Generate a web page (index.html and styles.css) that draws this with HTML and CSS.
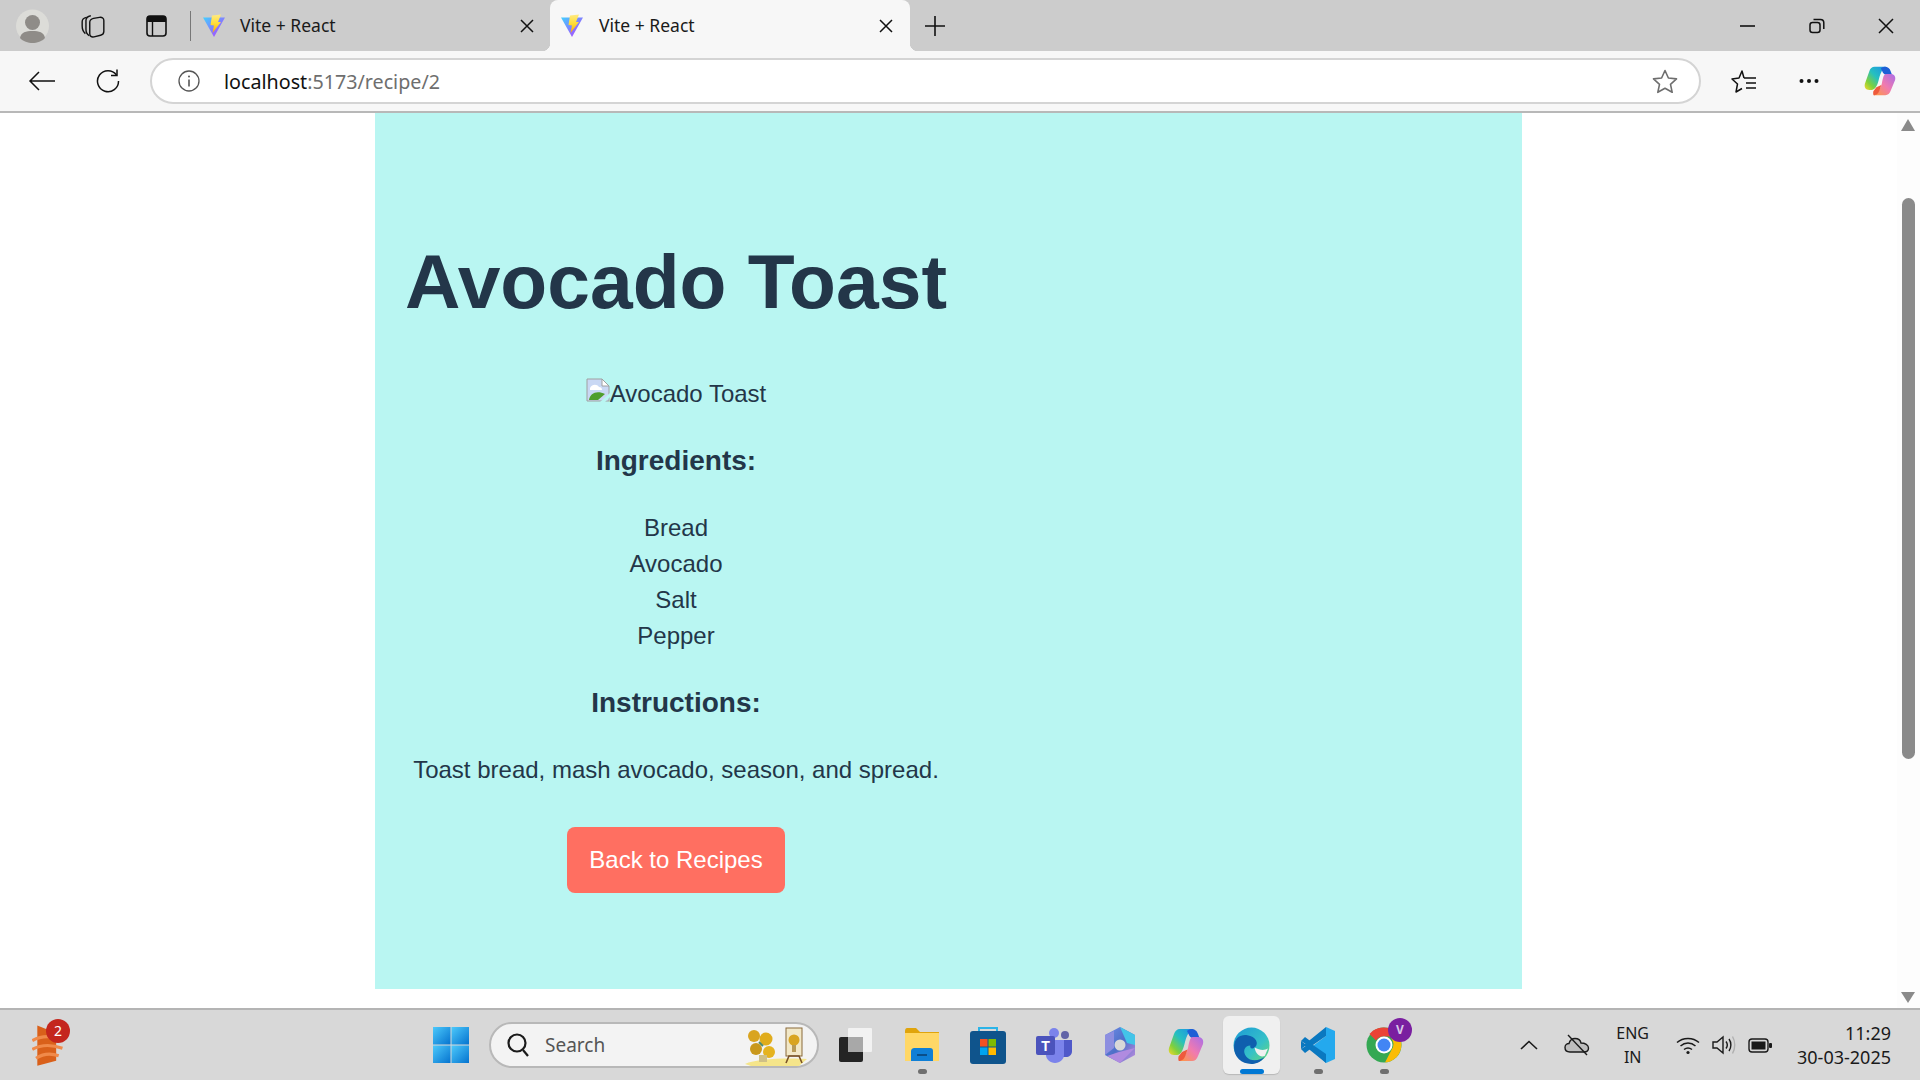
FILE: index.html
```html
<!DOCTYPE html>
<html>
<head>
    <title>Vite + React</title>
    <link rel="stylesheet" href="styles.css">
</head>
<body>
    <svg class="defs" width="0" height="0">
        <defs>
            <linearGradient id="viteBlue" x1="0" y1="0" x2="1" y2="1">
                <stop offset="0" stop-color="#41d1ff"/>
                <stop offset="1" stop-color="#bd34fe"/>
            </linearGradient>
            <linearGradient id="viteBolt" x1="0" y1="0" x2="0" y2="1">
                <stop offset="0" stop-color="#ffea83"/>
                <stop offset="0.5" stop-color="#ffdd35"/>
                <stop offset="1" stop-color="#ffa800"/>
            </linearGradient>
            <linearGradient id="copilotA" x1="1" y1="0" x2="0" y2="1">
                <stop offset="0" stop-color="#1b8fe8"/>
                <stop offset="0.45" stop-color="#25c0c0"/>
                <stop offset="0.75" stop-color="#7fd03c"/>
                <stop offset="1" stop-color="#f7d82a"/>
            </linearGradient>
            <linearGradient id="copilotB" x1="1" y1="0" x2="0" y2="1">
                <stop offset="0" stop-color="#a86ee8"/>
                <stop offset="0.5" stop-color="#f07ab0"/>
                <stop offset="1" stop-color="#ff9a3c"/>
            </linearGradient>
            <linearGradient id="edgeG" x1="0" y1="0" x2="1" y2="1">
                <stop offset="0" stop-color="#1c9ad6"/>
                <stop offset="0.6" stop-color="#35c1c8"/>
                <stop offset="1" stop-color="#6fdc6b"/>
            </linearGradient>
            <linearGradient id="winG" x1="0" y1="0" x2="1" y2="1">
                <stop offset="0" stop-color="#4cc9fb"/>
                <stop offset="1" stop-color="#0573cf"/>
            </linearGradient>
            <linearGradient id="m365G" x1="0" y1="0" x2="1" y2="1">
                <stop offset="0" stop-color="#6f8fe8"/>
                <stop offset="0.5" stop-color="#4e6fc8"/>
                <stop offset="1" stop-color="#c58fe0"/>
            </linearGradient>
            <symbol id="vite" viewBox="0 0 24 24">
                <path d="M1 3.5 L23 3.5 L12 23 Z" fill="url(#viteBlue)"/>
                <path d="M10 1.5 L19 0.5 L16 8 L19 8 L10.5 19 L12 11.5 L8.5 11 Z" fill="url(#viteBolt)"/>
            </symbol>
            <symbol id="copilot" viewBox="0 0 36 36">
                <path d="M12 2 H25 C21 4 19 8 17 15 C15.5 22 13 28 9 28 H6 C2 28 0 25 1 21 L6 7 C7 4 9 2 12 2 Z" fill="url(#copilotA)"/>
                <path d="M23 2 C27 2 29 4 30 7 L31.5 11 H25 C23 11 21.5 9.5 20.5 7 L19 4 C20 3 21.5 2 23 2 Z" fill="#1d5fd6"/>
                <path d="M25 10 H30 C34 10 36 13 35 17 L30 29 C29 32 27 34 24 34 H11 C15 32 18 28 20 21 C21.5 14 22 10 25 10 Z" fill="url(#copilotB)"/>
                <path d="M11 34 C14 34 16.5 32 18 27 L19.5 22.5 L14 25 L10.5 29.5 C10 32 10.5 34 11 34 Z" fill="#ef5a3c"/>
            </symbol>
        </defs>
    </svg>

    <div class="window">
        <!-- Tab strip -->
        <div class="tabstrip">
            <div class="strip-tools">
                <svg class="avatar" width="33" height="34" viewBox="0 0 33 34">
                    <circle cx="16.5" cy="17" r="16.5" fill="#dcdcd8"/>
                    <circle cx="16.5" cy="13.5" r="7.5" fill="#8f8c88"/>
                    <path d="M4 29 C5 23 10 22 16.5 22 C23 22 28 23 29 29 C26 32.5 21 34 16.5 34 C12 34 7 32.5 4 29 Z" fill="#8f8c88"/>
                </svg>
                <svg class="tool-collections" width="24" height="26" viewBox="0 0 22 24" fill="none" stroke="#111" stroke-width="1.3">
                    <path d="M4 19 C1.5 17 1 15 1 12 V8 C1 6 2.5 4.5 5 4"/>
                    <path d="M7.5 21 C5 19.5 4.5 17.5 4.5 15 V7 C4.5 4.5 6 3 9 2.5"/>
                    <path d="M8 8.5 C8 6.5 9.5 5.5 11.5 5 L17 4 C19.5 3.6 21 5 21 7 V17 C21 19 20 20 18 20.5 L12 22 C9.5 22.5 8 21.5 8 19 Z"/>
                </svg>
                <svg class="tool-tabs" width="21" height="22" viewBox="0 0 21 22" fill="none">
                    <rect x="1" y="1" width="19" height="20" rx="3" stroke="#111" stroke-width="1.6"/>
                    <path d="M1 4 a3 3 0 0 1 3 -3 h13 a3 3 0 0 1 3 3 v3 h-19 Z" fill="#111"/>
                    <path d="M6.5 7 v14" stroke="#111" stroke-width="1.4"/>
                </svg>
                <span class="strip-sep"></span>
            </div>
            <div class="tab">
                <svg width="24" height="24"><use href="#vite"/></svg>
                <span class="tab-title">Vite + React</span>
                <svg class="tab-close" width="14" height="14" viewBox="0 0 14 14" stroke="#111" stroke-width="1.5"><path d="M1 1 L13 13 M13 1 L1 13"/></svg>
            </div>
            <div class="tab tab-active">
                <svg width="24" height="24"><use href="#vite"/></svg>
                <span class="tab-title">Vite + React</span>
                <svg class="tab-close" width="14" height="14" viewBox="0 0 14 14" stroke="#111" stroke-width="1.5"><path d="M1 1 L13 13 M13 1 L1 13"/></svg>
            </div>
            <svg class="new-tab" width="22" height="22" viewBox="0 0 22 22" stroke="#111" stroke-width="1.6"><path d="M11 1 V21 M1 11 H21"/></svg>
            <div class="win-controls">
                <svg width="16" height="16" viewBox="0 0 16 16" stroke="#111" stroke-width="1.6"><path d="M0 8 H15"/></svg>
                <svg width="16" height="16" viewBox="0 0 16 16" fill="none" stroke="#111" stroke-width="1.5"><rect x="1" y="4.5" width="10" height="10" rx="2.5"/><path d="M4.5 1.5 H11.5 C13.5 1.5 14.8 2.8 14.8 4.8 V11"/></svg>
                <svg width="16" height="16" viewBox="0 0 16 16" stroke="#111" stroke-width="1.5"><path d="M1 1 L15 15 M15 1 L1 15"/></svg>
            </div>
        </div>

        <!-- Address bar -->
        <div class="toolbar">
            <svg class="btn-back" width="28" height="22" viewBox="0 0 28 22" fill="none" stroke="#111" stroke-width="1.5"><path d="M27 11 H2 M11 2 L2 11 L11 20"/></svg>
            <svg class="btn-reload" width="24" height="24" viewBox="0 0 24 24" fill="none" stroke="#111" stroke-width="1.5"><path d="M20.5 6 A10.5 10.5 0 1 0 22.5 12"/><path d="M21 0.5 V6.5 H15"/></svg>
            <div class="address">
                <svg width="24" height="24" viewBox="0 0 24 24" fill="none" stroke="#555" stroke-width="1.3"><circle cx="12" cy="12" r="10"/><path d="M12 10.5 V17.5" stroke-width="1.6"/><circle cx="12" cy="7.5" r="1" fill="#555" stroke="none"/></svg>
                <div class="url"><span class="url-host">localhost</span>:5173/recipe/2</div>
                <svg class="star" width="26" height="25" viewBox="0 0 26 25" fill="none" stroke="#6e6e6e" stroke-width="1.6" stroke-linejoin="round"><path d="M13 1.5 L16.4 9 L24.5 9.9 L18.5 15.3 L20.2 23.3 L13 19.2 L5.8 23.3 L7.5 15.3 L1.5 9.9 L9.6 9 Z"/></svg>
            </div>
            <svg class="btn-favs" width="26" height="25" viewBox="0 0 26 25" fill="none" stroke="#111" stroke-width="1.5" stroke-linejoin="round"><path d="M13 9 L11 2 L8 9 L1 10 L6.5 15 L5 23 L11 19.5"/><path d="M13 9 H25 M15 14 H25 M15 19 H25"/></svg>
            <svg class="btn-more" width="20" height="6" viewBox="0 0 20 6" fill="#111"><circle cx="2.5" cy="3" r="2"/><circle cx="10" cy="3" r="2"/><circle cx="17.5" cy="3" r="2"/></svg>
            <svg class="btn-copilot" width="34" height="32"><use href="#copilot"/></svg>
        </div>

        <!-- Page viewport -->
        <div class="viewport">
            <div class="page">
                <main class="recipe">
                    <div class="recipe-detail">
                        <h1>Avocado Toast</h1>
                        <div class="broken-img">
                            <svg width="24" height="24" viewBox="0 0 24 24">
                                <path d="M1 1 H16 L23 8 V23 H1 Z" fill="#c9d8f4" stroke="#a0a0a0"/>
                                <path d="M16 1 V8 H23 Z" fill="#fff" stroke="#a0a0a0"/>
                                <path d="M4 10 C6 6 11 6 13 9 C15 9 16 10 16 12 L4 12 Z" fill="#fff"/>
                                <path d="M3 22 C4 15 11 12 19 16 L12 22 Z" fill="#4f9e2c"/>
                                <path d="M14 24 L24 15 V19 L19 24 Z" fill="#b9f6f2"/>
                            </svg><span>Avocado Toast</span>
                        </div>
                        <h3>Ingredients:</h3>
                        <ul>
                            <li>Bread</li>
                            <li>Avocado</li>
                            <li>Salt</li>
                            <li>Pepper</li>
                        </ul>
                        <h3>Instructions:</h3>
                        <p>Toast bread, mash avocado, season, and spread.</p>
                        <a class="back-btn">Back to Recipes</a>
                    </div>
                </main>
            </div>
            <div class="scrollbar">
                <span class="arrow-up"></span>
                <div class="track"><div class="thumb"></div></div>
                <span class="arrow-down"></span>
            </div>
        </div>

        <!-- Windows taskbar -->
        <div class="taskbar">
            <div class="task-left">
                <svg width="32" height="44" viewBox="3 8 25 35">
                    <path d="M7 10 L22 16 V38 L7 42 Z" fill="#d9601a"/>
                    <path d="M3 22 C10 18 18 18 27 21 M3 29 C10 25 18 25 27 28 M6 36 C12 32 18 32 24 34" fill="none" stroke="#f08a4a" stroke-width="2.5"/>
                </svg>
                <span class="task-badge">2</span>
            </div>
            <div class="task-center">
                <svg class="win-logo" width="36" height="36" viewBox="0 0 36 36" fill="url(#winG)">
                    <rect x="0" y="0" width="17.5" height="17.5"/>
                    <rect x="18.5" y="0" width="17.5" height="17.5"/>
                    <rect x="0" y="18.5" width="17.5" height="17.5"/>
                    <rect x="18.5" y="18.5" width="17.5" height="17.5"/>
                </svg>
                <div class="search">
                    <svg width="24" height="26" viewBox="0 0 24 26" fill="none" stroke="#1a1a1a" stroke-width="2.2"><circle cx="11" cy="11" r="8.5"/><path d="M17 18 L22 24"/></svg>
                    <span class="search-text">Search</span>
                    <svg class="search-art" width="64" height="44" viewBox="0 0 64 44">
                        <path d="M0 42 C12 36 48 36 62 37 L54 44 H6 Z" fill="#f5e58a"/>
                        <circle cx="9" cy="14" r="6" fill="#d9a420"/>
                        <circle cx="21" cy="17" r="6.5" fill="#e0ac1c"/>
                        <circle cx="11" cy="27" r="6" fill="#c9981c"/>
                        <circle cx="24" cy="30" r="6" fill="#e5b320"/>
                        <path d="M14 20 L18 24" stroke="#4e8a6a" stroke-width="2"/>
                        <rect x="14" y="33" width="8" height="7" fill="#cfc087"/>
                        <rect x="41" y="6" width="16" height="28" fill="#f2e8c8" stroke="#8a6a3a"/>
                        <circle cx="49" cy="18" r="5.5" fill="#d9a420"/>
                        <rect x="47" y="23" width="4" height="7" fill="#b79a58"/>
                        <path d="M41 41 L44 34 H54 L57 41" fill="none" stroke="#7a5228" stroke-width="1.6"/>
                    </svg>
                </div>
                <div class="task-icons">
                    <div class="task-icon">
                        <svg width="36" height="36" viewBox="0 0 36 36">
                            <rect x="1" y="10" width="24" height="25" rx="2" fill="#242424"/>
                            <rect x="10" y="1" width="24" height="24" rx="1" fill="#f2f2f2"/>
                            <rect x="10" y="10" width="15" height="15" fill="#a8a8a8"/>
                        </svg>
                    </div>
                    <div class="task-icon running">
                        <svg width="36" height="36" viewBox="0 0 36 36">
                            <path d="M1 4 C1 2 2 1 3 1 H12 L16 5 H35 V30 H1 Z" fill="#e0a40c"/>
                            <path d="M1 6 H35 V34 H1 Z" fill="#ffd766"/>
                            <path d="M7 24 C7 22 9 21 10 21 H26 C28 21 29 22 29 24 V34 H7 Z" fill="#0f7fd6"/>
                            <rect x="13" y="27" width="10" height="2" fill="#0a4f8a"/>
                        </svg>
                    </div>
                    <div class="task-icon">
                        <svg width="36" height="38" viewBox="0 0 36 38">
                            <path d="M9 8 V2 H27 V8" fill="none" stroke="#2bb4e8" stroke-width="2"/>
                            <rect x="0" y="5" width="36" height="33" rx="3" fill="#0f548c"/>
                            <rect x="10" y="13" width="7.5" height="7.5" fill="#f25022"/>
                            <rect x="18.5" y="13" width="7.5" height="7.5" fill="#7fba00"/>
                            <rect x="10" y="21.5" width="7.5" height="7.5" fill="#00a4ef"/>
                            <rect x="18.5" y="21.5" width="7.5" height="7.5" fill="#ffb900"/>
                        </svg>
                    </div>
                    <div class="task-icon">
                        <svg width="36" height="36" viewBox="0 0 36 36">
                            <circle cx="29" cy="8" r="4" fill="#6264a7"/>
                            <circle cx="18" cy="6" r="5" fill="#7b83eb"/>
                            <path d="M24 13 H36 V24 C36 28 33 30 30 30 H24 Z" fill="#5059c9"/>
                            <path d="M10 13 H28 V28 C28 32 24 36 19 36 C14 36 10 32 10 28 Z" fill="#7b83eb"/>
                            <rect x="0" y="9" width="19" height="19" rx="2" fill="#4b53bc"/>
                            <text class="teams-t" x="9.5" y="24">T</text>
                        </svg>
                    </div>
                    <div class="task-icon">
                        <svg width="34" height="38" viewBox="0 0 34 38">
                            <path d="M17 1 L32 9 V29 L17 37 L2 29 V9 Z" fill="url(#m365G)"/>
                            <path d="M17 1 L32 9 V19 L24 17 Z" fill="#43c4e8"/>
                            <path d="M2 9 L11 5 V22 L2 29 Z" fill="#8d8fe0"/>
                            <path d="M32 22 L17 37 L4 30 L16 26 Z" fill="#b08be0"/>
                            <circle cx="17" cy="19" r="5.5" fill="#d8d8d8"/>
                        </svg>
                    </div>
                    <div class="task-icon">
                        <svg width="36" height="36"><use href="#copilot"/></svg>
                    </div>
                    <div class="task-icon active">
                        <svg width="37" height="37" viewBox="0 0 36 36">
                            <circle cx="18" cy="18" r="17.5" fill="url(#edgeG)"/>
                            <path d="M1 20 C1 10 8 7 14 8 C22 9 26 16 21 20 C18 22 16 20 17 18 C11 18 9 24 13 29 C17 34 26 33 31 29 C27 35 21 36 18 36 C8 36 1 29 1 20 Z" fill="#0f5fae"/>
                            <path d="M21 20 C26 23 31 23 34 21 L31 28 C27 30 22 27 21 20 Z" fill="#f0f0f0"/>
                        </svg>
                    </div>
                    <div class="task-icon running">
                        <svg width="34" height="36" viewBox="0 0 34 36">
                            <path d="M25 0 L34 4 V32 L25 36 L9 21 L25 9 Z" fill="#24a9ee"/>
                            <path d="M25 9 V0 L4 17 L0 14 V22 L4 19 L25 36 V27 L12 18 Z" fill="#0a78c0"/>
                            <path d="M0 14 L4 10 L12 16 L8 19 Z M0 22 L4 26 L12 20 L8 17 Z" fill="#0a78c0"/>
                        </svg>
                    </div>
                    <div class="task-icon running chrome">
                        <svg width="36" height="36" viewBox="0 0 36 36">
                            <circle cx="18" cy="18" r="17.5" fill="#34a853"/>
                            <path d="M18 0.5 A17.5 17.5 0 0 1 33.2 9.5 L18 9.5 A9 9 0 0 0 10 13.5 L3.5 7 A17.5 17.5 0 0 1 18 0.5 Z" fill="#ea4335"/>
                            <path d="M33.2 9.5 A17.5 17.5 0 0 1 19 35.5 L26 22 A9 9 0 0 0 25 11 Z" fill="#fbbc04"/>
                            <circle cx="18" cy="18" r="8.5" fill="#fff"/>
                            <circle cx="18" cy="18" r="6.5" fill="#4285f4"/>
                        </svg>
                        <span class="chrome-badge">V</span>
                    </div>
                </div>
            </div>
            <div class="tray">
                <svg width="18" height="10" viewBox="0 0 18 10" fill="none" stroke="#1a1a1a" stroke-width="1.6"><path d="M1 9 L9 1.5 L17 9"/></svg>
                <svg class="tray-cloud" width="26" height="22" viewBox="0 0 26 22" fill="none" stroke="#1a1a1a" stroke-width="1.4"><path d="M6 18 C2.5 18 1 16 1 13.5 C1 11 3 9.5 5 9.5 C6 6 8.5 4.5 11 4.5 C14 4.5 16.5 6.5 17 9 C21 9 24.5 11 24.5 14 C24.5 16.5 23 18 20 18 Z" fill="#bdbdbd"/><path d="M4 1 L23 21"/></svg>
                <div class="lang"><span>ENG</span><span>IN</span></div>
                <svg class="tray-wifi" width="24" height="19" viewBox="0 0 24 19" fill="none" stroke="#1a1a1a" stroke-width="1.5"><path d="M1 6.5 C7 1 17 1 23 6.5 M4.5 10 C9 6 15 6 19.5 10 M8 13.5 C10.5 11.5 13.5 11.5 16 13.5"/><circle cx="12" cy="16.5" r="1.6" fill="#1a1a1a" stroke="none"/></svg>
                <svg class="tray-sound" width="24" height="20" viewBox="0 0 24 20" fill="none" stroke="#1a1a1a" stroke-width="1.4"><path d="M1 7 H5 L11 2 V18 L5 13 H1 Z"/><path d="M14 6.5 C15.5 8.5 15.5 11.5 14 13.5 M17 4 C19.5 7.5 19.5 12.5 17 16"/><path d="M20.5 1.5 C23.5 6.5 23.5 13.5 20.5 18.5" stroke="#b0b0b0"/></svg>
                <svg class="tray-batt" width="24" height="15" viewBox="0 0 24 15"><rect x="1" y="1" width="19" height="13" rx="3" fill="none" stroke="#1a1a1a" stroke-width="1.4"/><rect x="3.5" y="3.5" width="14" height="8" fill="#1a1a1a"/><rect x="21" y="5" width="3" height="5" rx="1" fill="#1a1a1a"/></svg>
                <div class="clock"><span>11:29</span><span>30-03-2025</span></div>
            </div>
        </div>
    </div>
</body>
</html>
```

FILE: styles.css
```css
/* Browser window */
html, body {
    margin: 0;
    padding: 0;
    height: 100%;
    overflow: hidden;
}

body {
    font-family: "Liberation Sans", Arial, sans-serif;
    background-color: #fff;
}

svg {
    display: block;
    flex-shrink: 0;
}

.defs {
    position: absolute;
}

.window {
    display: flex;
    flex-direction: column;
    height: 1080px;
}

/* Tab strip */
.tabstrip {
    display: flex;
    align-items: center;
    height: 51px;
    flex-shrink: 0;
    background-color: #cccccc;
    font-family: "Noto Sans", "Open Sans", sans-serif;
}

.strip-tools {
    display: flex;
    align-items: center;
    height: 51px;
    padding-left: 16px;
}

.tool-collections {
    margin-left: 32px;
}

.tool-tabs {
    margin-left: 41px;
}

.strip-sep {
    width: 1px;
    height: 30px;
    margin-left: 23px;
    background-color: #777;
}

.tab {
    display: flex;
    align-items: center;
    width: 359px;
    height: 51px;
    padding: 0 16px 0 11px;
    box-sizing: border-box;
    color: #1a1a1a;
    font-size: 17.5px;
}

.tab-title {
    flex: 1;
    margin: -2px 0 0 14px;
}

.tab-active {
    position: relative;
    width: 360px;
    padding: 0 17px 0 10px;
    background-color: #f7f7f7;
    border-radius: 8px 8px 0 0;
}

.tab-active .tab-title {
    margin-left: 15px;
}

/* flared corners at the foot of the active tab */
.tab-active::before,
.tab-active::after {
    content: "";
    position: absolute;
    bottom: 0;
    width: 8px;
    height: 8px;
}

.tab-active::before {
    left: -8px;
    background: radial-gradient(circle at 0 0, transparent 8px, #f7f7f7 8.5px);
}

.tab-active::after {
    right: -8px;
    background: radial-gradient(circle at 100% 0, transparent 8px, #f7f7f7 8.5px);
}

.new-tab {
    margin-left: 14px;
}

.win-controls {
    display: flex;
    align-items: center;
    gap: 53px;
    margin-left: auto;
    padding-right: 26px;
}

/* Address bar */
.toolbar {
    display: flex;
    align-items: center;
    height: 60px;
    flex-shrink: 0;
    padding-left: 28px;
    background-color: #f7f7f7;
    border-bottom: 2px solid #b8b8b8;
}

.btn-reload {
    margin-left: 40px;
}

.address {
    display: flex;
    align-items: center;
    width: 1551px;
    height: 46px;
    margin-left: 30px;
    padding: 0 21px 0 25px;
    box-sizing: border-box;
    background-color: #fff;
    border: 2px solid #d4d4d4;
    border-radius: 23px;
}

.url {
    flex: 1;
    margin-left: 23px;
    color: #6e6e6e;
    font-family: "Noto Sans", "Open Sans", sans-serif;
    font-size: 19.7px;
}

.url-host {
    color: #111;
}

.btn-favs {
    margin-left: 30px;
}

.btn-more {
    margin-left: 42px;
}

.btn-copilot {
    margin-left: 44px;
}

/* Page */
.viewport {
    display: flex;
    flex: 1;
    min-height: 0;
}

.page {
    flex: 1;
    padding-left: 375px;
}

.recipe {
    width: 1117px;
    height: 876px;
    padding-left: 30px;
    background-color: #b9f6f2;
    color: #233649;
    font-size: 24px;
    line-height: 36px;
}

.recipe-detail {
    display: flex;
    flex-direction: column;
    align-items: center;
    width: 542px;
    text-align: center;
}

h1 {
    margin: 126px 0 0;
    font-size: 76.8px;
    line-height: 84px;
    white-space: nowrap;
}

.broken-img {
    display: flex;
    align-items: baseline;
    height: 36px;
    margin-top: 53px;
}

h3 {
    margin: 31px 0 0;
    font-size: 28px;
    line-height: 36px;
}

ul {
    margin: 31px 0 0;
    padding: 0;
    list-style: none;
}

p {
    margin: 31px 0 0;
    white-space: nowrap;
}

.back-btn {
    margin-top: 39px;
    padding: 15px 22px;
    color: #fff;
    background-color: #ff6f61;
    border-radius: 8px;
}

/* Scrollbar */
.scrollbar {
    display: flex;
    flex-direction: column;
    align-items: center;
    width: 23px;
    padding-right: 1px;
    box-sizing: border-box;
    background-color: #fdfdfd;
}

.arrow-up,
.arrow-down {
    width: 0;
    height: 0;
    border-left: 7px solid transparent;
    border-right: 7px solid transparent;
    flex-shrink: 0;
}

.arrow-up {
    margin-top: 6px;
    border-bottom: 12px solid #8a8a8a;
}

.arrow-down {
    margin-bottom: 5px;
    border-top: 11px solid #8a8a8a;
}

.track {
    flex: 1;
    width: 100%;
    display: flex;
    justify-content: center;
}

.thumb {
    width: 13px;
    height: 561px;
    margin-top: 67px;
    background-color: #8a8a8a;
    border-radius: 7px;
}

/* Taskbar */
.taskbar {
    display: flex;
    align-items: center;
    height: 70px;
    flex-shrink: 0;
    background-color: #d8d8d8;
    border-top: 2px solid #b4b4b4;
    color: #1a1a1a;
    font-family: "Noto Sans", "Open Sans", sans-serif;
}

.task-left {
    position: relative;
    width: 433px;
    padding-left: 32px;
    box-sizing: border-box;
}

.task-badge {
    position: absolute;
    top: -4px;
    left: 46px;
    width: 24px;
    height: 24px;
    border-radius: 50%;
    background-color: #c4261d;
    color: #fff;
    font-size: 14px;
    line-height: 24px;
    text-align: center;
}

.task-center {
    display: flex;
    align-items: center;
}

.search {
    display: flex;
    align-items: center;
    position: relative;
    width: 330px;
    height: 46px;
    margin-left: 20px;
    padding: 0 0 0 15px;
    box-sizing: border-box;
    background-color: #f3f3f3;
    border: 2px solid #b8b8b8;
    border-radius: 23px;
}

.search-text {
    margin-left: 15px;
    color: #555;
    font-size: 19px;
}

.search-art {
    position: absolute;
    right: 8px;
    bottom: 0;
}

.task-icons {
    display: flex;
    align-items: center;
    margin-left: 8px;
}

.task-icon {
    display: flex;
    align-items: center;
    justify-content: center;
    position: relative;
    width: 57px;
    height: 58px;
    margin-right: 9px;
}

.task-icon.running::after,
.task-icon.active::after {
    content: "";
    position: absolute;
    bottom: 0;
    left: 50%;
    width: 9px;
    height: 5px;
    margin-left: -4px;
    background-color: #6f6f6f;
    border-radius: 3px;
}

.task-icon.active {
    background-color: #f0f0f0;
    border-radius: 6px;
    box-shadow: 0 1px 1px #b8b8b8;
}

.task-icon.active::after {
    width: 24px;
    margin-left: -12px;
    background-color: #0078d4;
}

.teams-t {
    fill: #fff;
    font-family: "Liberation Sans", sans-serif;
    font-size: 14px;
    font-weight: bold;
    text-anchor: middle;
}

.chrome-badge {
    position: absolute;
    top: 2px;
    right: 0;
    width: 24px;
    height: 24px;
    border-radius: 50%;
    background-color: #7a1fa0;
    color: #d8c8e8;
    font-size: 12px;
    font-weight: bold;
    line-height: 24px;
    text-align: center;
}

.tray {
    display: flex;
    align-items: center;
    margin-left: auto;
    padding-right: 29px;
}

.tray-cloud {
    margin-left: 26px;
}

.lang,
.clock {
    display: flex;
    flex-direction: column;
    line-height: 24px;
}

.lang {
    align-items: center;
    margin-left: 26px;
    font-size: 16px;
}

.tray-wifi {
    margin-left: 27px;
}

.tray-sound {
    margin-left: 12px;
}

.tray-batt {
    margin-left: 12px;
}

.clock {
    align-items: flex-end;
    margin-left: 25px;
    font-size: 18px;
}
```
